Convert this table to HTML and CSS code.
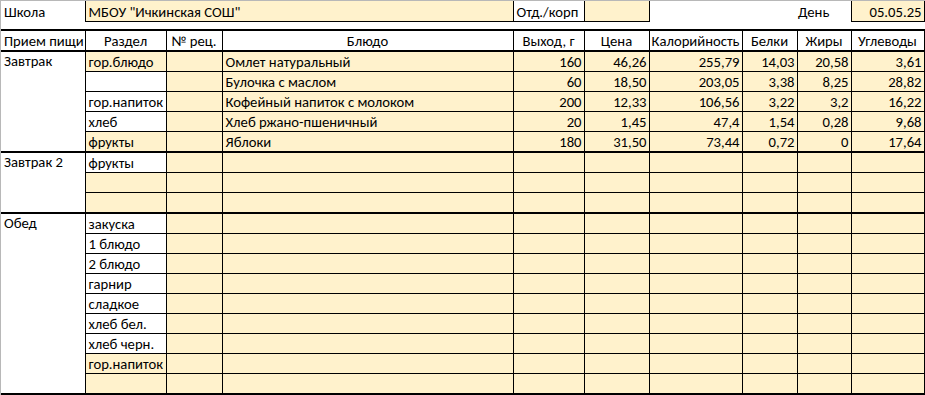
FILE: index.html
```html
<!DOCTYPE html>
<html lang="ru">
<head>
<meta charset="utf-8">
<title>Меню</title>
<link rel="stylesheet" href="styles.css">
</head>
<body>
<div class="sheet">
<table class="grid">
  <colgroup>
    <col class="c1"><col class="c2"><col class="c3"><col class="c4"><col class="c5">
    <col class="c6"><col class="c7"><col class="c8"><col class="c9"><col class="c10">
  </colgroup>
  <tbody>
    <tr class="info">
      <td class="lbl">Школа</td>
      <td class="fill box" colspan="3">МБОУ "Ичкинская СОШ"</td>
      <td class="under">Отд./корп</td>
      <td class="fill box"></td>
      <td></td><td></td>
      <td class="lbl day">День</td>
      <td class="fill box num">05.05.25</td>
    </tr>
    <tr class="spacer"><td colspan="10"></td></tr>
    <tr class="head">
      <th class="first">Прием пищи</th><th>Раздел</th><th>№ рец.</th><th>Блюдо</th><th>Выход, г</th>
      <th>Цена</th><th>Калорийность</th><th>Белки</th><th>Жиры</th><th>Углеводы</th>
    </tr>

    <tr class="group">
      <td class="meal" rowspan="5">Завтрак</td>
      <td class="fill">гор.блюдо</td><td class="fill"></td><td class="fill">Омлет натуральный</td>
      <td class="fill num">160</td><td class="fill num">46,26</td><td class="fill num">255,79</td>
      <td class="fill num">14,03</td><td class="fill num">20,58</td><td class="fill num">3,61</td>
    </tr>
    <tr>
      <td></td><td class="fill"></td><td class="fill">Булочка с маслом</td>
      <td class="fill num">60</td><td class="fill num">18,50</td><td class="fill num">203,05</td>
      <td class="fill num">3,38</td><td class="fill num">8,25</td><td class="fill num">28,82</td>
    </tr>
    <tr>
      <td>гор.напиток</td><td class="fill"></td><td class="fill">Кофейный напиток с молоком</td>
      <td class="fill num">200</td><td class="fill num">12,33</td><td class="fill num">106,56</td>
      <td class="fill num">3,22</td><td class="fill num">3,2</td><td class="fill num">16,22</td>
    </tr>
    <tr>
      <td>хлеб</td><td class="fill"></td><td class="fill">Хлеб ржано-пшеничный</td>
      <td class="fill num">20</td><td class="fill num">1,45</td><td class="fill num">47,4</td>
      <td class="fill num">1,54</td><td class="fill num">0,28</td><td class="fill num">9,68</td>
    </tr>
    <tr>
      <td class="fill">фрукты</td><td class="fill"></td><td class="fill">Яблоки</td>
      <td class="fill num">180</td><td class="fill num">31,50</td><td class="fill num">73,44</td>
      <td class="fill num">0,72</td><td class="fill num">0</td><td class="fill num">17,64</td>
    </tr>

    <tr class="group">
      <td class="meal" rowspan="3">Завтрак 2</td>
      <td>фрукты</td><td class="fill"></td><td class="fill"></td><td class="fill"></td><td class="fill"></td>
      <td class="fill"></td><td class="fill"></td><td class="fill"></td><td class="fill"></td>
    </tr>
    <tr>
      <td class="fill"></td><td class="fill"></td><td class="fill"></td><td class="fill"></td><td class="fill"></td>
      <td class="fill"></td><td class="fill"></td><td class="fill"></td><td class="fill"></td>
    </tr>
    <tr>
      <td class="fill"></td><td class="fill"></td><td class="fill"></td><td class="fill"></td><td class="fill"></td>
      <td class="fill"></td><td class="fill"></td><td class="fill"></td><td class="fill"></td>
    </tr>

    <tr class="group">
      <td class="meal" rowspan="9">Обед</td>
      <td>закуска</td><td class="fill"></td><td class="fill"></td><td class="fill"></td><td class="fill"></td>
      <td class="fill"></td><td class="fill"></td><td class="fill"></td><td class="fill"></td>
    </tr>
    <tr>
      <td>1 блюдо</td><td class="fill"></td><td class="fill"></td><td class="fill"></td><td class="fill"></td>
      <td class="fill"></td><td class="fill"></td><td class="fill"></td><td class="fill"></td>
    </tr>
    <tr>
      <td>2 блюдо</td><td class="fill"></td><td class="fill"></td><td class="fill"></td><td class="fill"></td>
      <td class="fill"></td><td class="fill"></td><td class="fill"></td><td class="fill"></td>
    </tr>
    <tr>
      <td>гарнир</td><td class="fill"></td><td class="fill"></td><td class="fill"></td><td class="fill"></td>
      <td class="fill"></td><td class="fill"></td><td class="fill"></td><td class="fill"></td>
    </tr>
    <tr>
      <td>сладкое</td><td class="fill"></td><td class="fill"></td><td class="fill"></td><td class="fill"></td>
      <td class="fill"></td><td class="fill"></td><td class="fill"></td><td class="fill"></td>
    </tr>
    <tr>
      <td>хлеб бел.</td><td class="fill"></td><td class="fill"></td><td class="fill"></td><td class="fill"></td>
      <td class="fill"></td><td class="fill"></td><td class="fill"></td><td class="fill"></td>
    </tr>
    <tr>
      <td>хлеб черн.</td><td class="fill"></td><td class="fill"></td><td class="fill"></td><td class="fill"></td>
      <td class="fill"></td><td class="fill"></td><td class="fill"></td><td class="fill"></td>
    </tr>
    <tr>
      <td class="fill">гор.напиток</td><td class="fill"></td><td class="fill"></td><td class="fill"></td><td class="fill"></td>
      <td class="fill"></td><td class="fill"></td><td class="fill"></td><td class="fill"></td>
    </tr>
    <tr class="last">
      <td class="fill"></td><td class="fill"></td><td class="fill"></td><td class="fill"></td><td class="fill"></td>
      <td class="fill"></td><td class="fill"></td><td class="fill"></td><td class="fill"></td>
    </tr>
  </tbody>
</table>
</div>
</body>
</html>
```

FILE: styles.css
```css
html, body {
  margin: 0;
  padding: 0;
  background: #ffffff;
}

body {
  font-family: Carlito, Lato, "Liberation Sans", sans-serif;
  font-size: 14.67px;
  color: #000000;
  overflow: hidden;
}

.sheet {
  width: 925px;
  height: 395px;
  border-top: 1px solid #b8b8b8;
  border-left: 1px solid #b8b8b8;
  box-sizing: border-box;
}

.grid {
  border-collapse: collapse;
  table-layout: fixed;
  width: 923px;
}

.c1 { width: 84px; }
.c2 { width: 81px; }
.c3 { width: 56px; }
.c4 { width: 291px; }
.c5 { width: 71px; }
.c6 { width: 65px; }
.c7 { width: 93px; }
.c8 { width: 55px; }
.c9 { width: 54px; }
.c10 { width: 73px; }

.grid td,
.grid th {
  height: 19px;
  padding: 0 3px 0 3px;
  line-height: 18px;
  white-space: nowrap;
  overflow: hidden;
  vertical-align: bottom;
  border: 1px solid #000000;
  text-align: left;
  font-weight: normal;
}

.grid tr {
  height: 20px;
}

.grid .fill {
  background: #fff2cc;
}

.grid .num {
  text-align: right;
  padding-right: 2px;
}

/* info row */
.grid .info td {
  border: none;
  height: 18px;
}
.grid .info .box {
  border-left: 1px solid #000;
  border-right: 1px solid #000;
  border-bottom: 1px solid #000;
}
.grid .info .under {
  border-bottom: 1px solid #000;
}
.grid .info .lbl {
  padding-left: 3px;
}
.grid .info .day {
  padding-left: 1px;
}

.grid .spacer td {
  border: none;
  height: 7px;
  padding: 0;
  line-height: 0;
}
.grid .spacer {
  height: 8px;
}

/* header */
.grid .head th {
  text-align: center;
  border-top: 2px solid #000;
  border-bottom: 2px solid #000;
  padding: 0 1px;
}
.grid .head .first {
  border-left: none;
  text-align: left;
  padding-left: 3px;
}

/* meal column */
.grid .meal {
  vertical-align: top;
  border-left: none;
  padding-top: 0;
  line-height: 19px;
}

.grid .group td {
  border-top: 2px solid #000;
}
.grid .last td {
  border-bottom: 2px solid #000;
}
.grid .meal {
  border-bottom: 2px solid #000;
}
```
